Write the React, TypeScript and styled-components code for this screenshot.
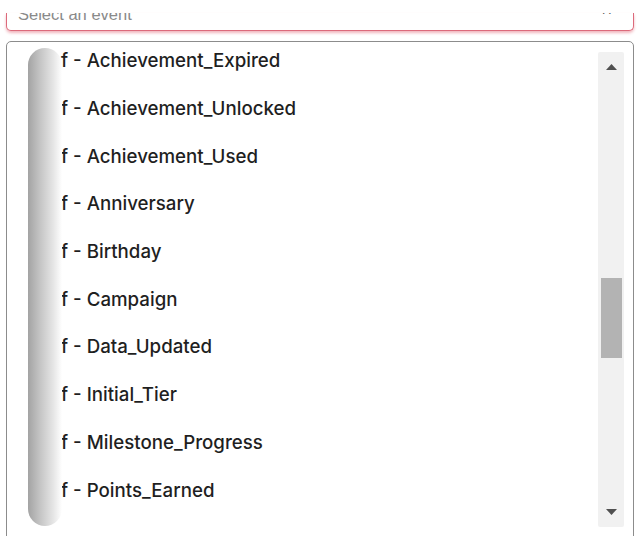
import React from 'react'
import styled, { createGlobalStyle } from 'styled-components'

const GlobalStyle = createGlobalStyle`
  html, body {
    margin: 0;
    padding: 0;
    background: #ffffff;
    overflow: hidden;
  }
  body {
    width: 640px;
    height: 536px;
    font-family: Inter, 'Noto Sans', Arial, sans-serif;
  }
`

const Page = styled.div`
  width: 640px;
  height: 536px;
  display: flex;
  flex-direction: column;
  padding: 13px 6px 0 6px;
  box-sizing: border-box;
  overflow: hidden;
`

/* search field scrolled mostly out of view: only its lower part shows */
const SearchInput = styled.div`
  height: 18px;
  flex-shrink: 0;
  display: flex;
  align-items: flex-end;
  justify-content: space-between;
  padding: 0 21px 7.5px 11px;
  box-sizing: border-box;
  border: 1px solid #dc6a7b;
  border-top: none;
  border-radius: 0 0 5px 5px;
  box-shadow: 0 2px 3px 0 rgba(220, 70, 90, 0.4);
  background: #fff;
  overflow: hidden;
`

const Placeholder = styled.span`
  font-family: 'Liberation Sans', Arial, sans-serif;
  font-size: 16.5px;
  line-height: 1;
  color: #8a8a8a;
  white-space: nowrap;
`

const Clear = styled.span`
  font-family: 'Liberation Sans', Arial, sans-serif;
  font-size: 18px;
  line-height: 1;
  color: #222;
  margin-bottom: 3.5px;
`

const ListBox = styled.div`
  position: relative;
  margin-top: 10px;
  height: 510px;
  flex-shrink: 0;
  display: flex;
  border: 1px solid #8c8c8c;
  border-radius: 5px;
  background: #fff;
  overflow: hidden;
`

const Rows = styled.ul`
  flex: 1;
  list-style: none;
  margin: -5px 0 0 0;
  padding: 0 0 0 54px;
`

const Row = styled.li`
  height: 47.7px;
  display: flex;
  align-items: center;
  font-size: 18.7px;
  font-weight: 500;
  color: #1f1f1f;
  white-space: nowrap;
`

const Fade = styled.div`
  position: absolute;
  left: 21px;
  top: 6px;
  width: 34px;
  height: 478px;
  border-radius: 17px;
  background: linear-gradient(to right, #a3a3a3 0%, #c4c4c4 35%, #e6e6e6 75%, #ffffff 100%);
`

const Track = styled.div`
  width: 26px;
  margin: 10px 9px 0 0;
  height: 475px;
  display: flex;
  flex-direction: column;
  align-items: center;
  background: #f1f1f1;
  border-radius: 2px;
`

const Arrow = styled.div<{ $down?: boolean }>`
  height: 30px;
  width: 100%;
  display: flex;
  align-items: center;
  justify-content: center;
  margin-top: ${({ $down }) => ($down ? 'auto' : '0')};
`

const Thumb = styled.div`
  width: 21px;
  height: 80px;
  margin-top: 196px;
  background: #b3b3b3;
`

const events = [
  'Achievement_Expired',
  'Achievement_Unlocked',
  'Achievement_Used',
  'Anniversary',
  'Birthday',
  'Campaign',
  'Data_Updated',
  'Initial_Tier',
  'Milestone_Progress',
  'Points_Earned',
]

const Triangle = ({ down }: { down?: boolean }) => (
  <svg width="11" height="6" viewBox="0 0 11 6">
    <polygon points={down ? '0,0 11,0 5.5,6' : '5.5,0 11,6 0,6'} fill="#505050" />
  </svg>
)

const App = () => (
  <>
    <GlobalStyle />
    <Page>
      <SearchInput>
        <Placeholder>Select an event</Placeholder>
        <Clear>×</Clear>
      </SearchInput>
      <ListBox>
        <Rows>
          {events.map((e) => (
            <Row key={e}>f - {e}</Row>
          ))}
        </Rows>
        <Track>
          <Arrow>
            <Triangle />
          </Arrow>
          <Thumb />
          <Arrow $down>
            <Triangle down />
          </Arrow>
        </Track>
        <Fade />
      </ListBox>
    </Page>
  </>
)

export default App
